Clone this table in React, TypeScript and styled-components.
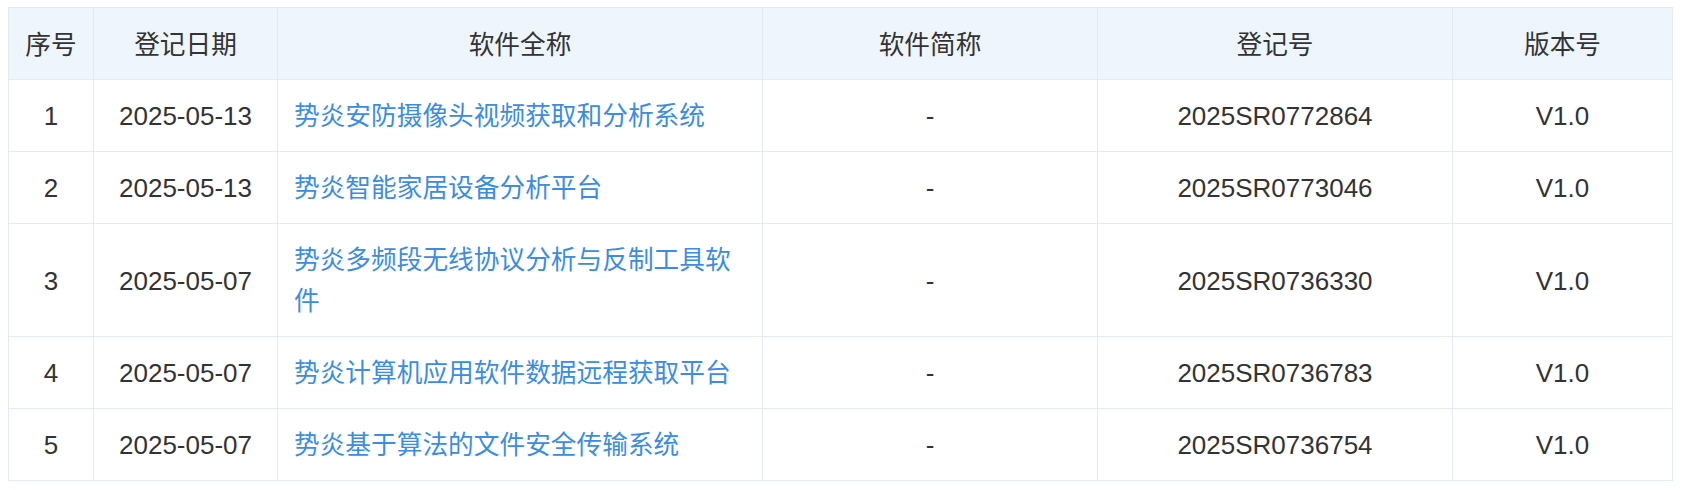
import React from "react";
import styled, { createGlobalStyle } from "styled-components";

const GlobalStyle = createGlobalStyle`
  html, body { background: #ffffff; }
  body {
    margin: 7px 8px;
    font-family: "Liberation Sans", "Noto Sans CJK SC", sans-serif;
    color: #333333;
  }
`;

const Table = styled.table`
  width: 1664px;
  border-collapse: collapse;
  table-layout: fixed;
  font-size: 26px;
  line-height: 41px;
`;

const HeadRow = styled.tr`
  background: #eef5fd;
`;

const HeadCell = styled.th`
  border: 1px solid #e4eaf1;
  padding: 17px 16px 13px;
  font-weight: normal;
  font-size: 25.7px;
  text-align: center;
  color: #333333;
`;

const Cell = styled.td<{ $align?: "left" | "center" }>`
  border: 1px solid #e4eaf1;
  padding: 16px 16px 14px;
  text-align: ${(p) => p.$align ?? "center"};
  vertical-align: middle;
  color: #333333;
`;

const NameLink = styled.a`
  color: #3a8de2;
  font-size: 25.7px;
  text-decoration: none;
  cursor: pointer;
`;

const widths = [85, 184, 485, 335, 355, 220];

const rows = [
  { no: 1, date: "2025-05-13", name: "势炎安防摄像头视频获取和分析系统", reg: "2025SR0772864" },
  { no: 2, date: "2025-05-13", name: "势炎智能家居设备分析平台", reg: "2025SR0773046" },
  { no: 3, date: "2025-05-07", name: "势炎多频段无线协议分析与反制工具软件", reg: "2025SR0736330" },
  { no: 4, date: "2025-05-07", name: "势炎计算机应用软件数据远程获取平台", reg: "2025SR0736783" },
  { no: 5, date: "2025-05-07", name: "势炎基于算法的文件安全传输系统", reg: "2025SR0736754" },
];

export default function App() {
  return (
    <>
      <GlobalStyle />
      <Table>
        <colgroup>
          {widths.map((w, i) => (
            <col key={i} style={{ width: w }} />
          ))}
        </colgroup>
        <thead>
          <HeadRow>
            <HeadCell>序号</HeadCell>
            <HeadCell>登记日期</HeadCell>
            <HeadCell>软件全称</HeadCell>
            <HeadCell>软件简称</HeadCell>
            <HeadCell>登记号</HeadCell>
            <HeadCell>版本号</HeadCell>
          </HeadRow>
        </thead>
        <tbody>
          {rows.map((r) => (
            <tr key={r.no}>
              <Cell>{r.no}</Cell>
              <Cell>{r.date}</Cell>
              <Cell $align="left">
                <NameLink>{r.name}</NameLink>
              </Cell>
              <Cell>-</Cell>
              <Cell>{r.reg}</Cell>
              <Cell>V1.0</Cell>
            </tr>
          ))}
        </tbody>
      </Table>
    </>
  );
}
